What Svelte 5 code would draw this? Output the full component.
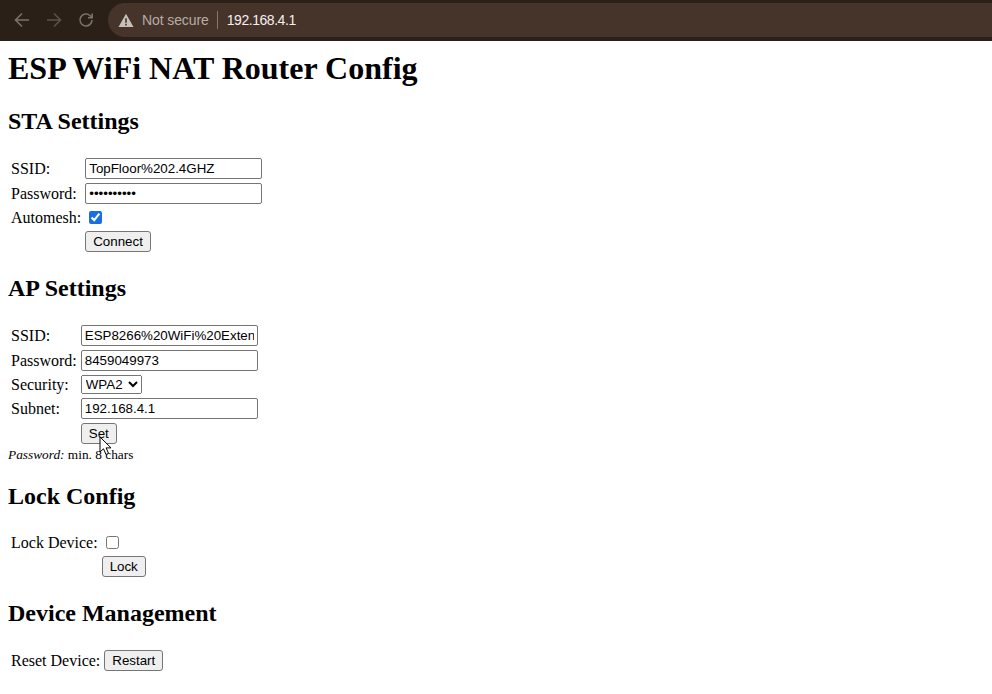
<script>
  let ssid = "TopFloor%202.4GHZ"
  let password = "0123456789"
  let automesh = true
  let locked = false
</script>

<style>
  :global(body) {
    margin: 0;
    background: #fff;
    color: #000;
    font-family: "Liberation Serif", serif;
    font-size: 16px;
  }
  .toolbar {
    display: flex;
    align-items: flex-start;
    height: 41px;
    padding-top: 3px;
    box-sizing: border-box;
    background: #2b2018;
  }
  .nav {
    display: flex;
    align-items: center;
    gap: 14px;
    height: 34px;
    width: 108px;
    padding-left: 13px;
    box-sizing: border-box;
  }
  .nav svg {
    display: block;
  }
  .omnibox {
    flex: 1;
    display: flex;
    align-items: center;
    height: 34px;
    padding-left: 10px;
    border-radius: 17px 0 0 17px;
    background: #46342b;
    font-family: "Liberation Sans", sans-serif;
    font-size: 14px;
  }
  .insecure {
    margin-left: 8px;
    padding-right: 8px;
    color: #b5aca7;
    border-right: 1px solid #85786f;
    line-height: 18px;
    letter-spacing: -0.1px;
  }
  .host {
    margin-left: 9px;
    color: #f4f0ee;
    letter-spacing: -0.45px;
  }
  main {
    padding: 9px 8px 8px;
  }
  h1 {
    margin: 0 0 21px;
    font-size: 32px;
  }
  h2 {
    margin: 20px 0;
    font-size: 24px;
  }
  table {
    border-spacing: 2px;
  }
  td {
    padding: 1px;
  }
  input,
  select,
  button {
    font-family: "Liberation Sans", sans-serif;
    font-size: 13.333px;
  }
  .text {
    width: 177px;
    height: 21px;
    box-sizing: border-box;
    padding: 1px 3px;
    margin: 0;
    border: 1px solid #767676;
    border-radius: 2px;
  }
  input[type="checkbox"] {
    display: block;
    margin: 3px 3px 3px 4px;
    accent-color: #1a6fe0;
  }
  select {
    width: 61px;
  }
  button {
    height: 21px;
    padding: 0 7px;
    border: 1px solid #767676;
    border-radius: 3px;
    background: #efefef;
  }
  .set-cell {
    position: relative;
  }
  .cursor {
    position: absolute;
    left: 19px;
    top: 14px;
  }
  .note {
    margin: 0;
    font-size: 13.333px;
  }
</style>

<header class="toolbar">
  <div class="nav">
    <svg width="18" height="18" viewBox="0 0 18 18" fill="none" stroke="#7b716a" stroke-width="1.6"><path d="M16 9H2.5M9 2.5 2.5 9 9 15.5" /></svg>
    <svg width="18" height="18" viewBox="0 0 18 18" fill="none" stroke="#5d524b" stroke-width="1.6"><path d="M2 9h13.5M9 2.5 15.5 9 9 15.5" /></svg>
    <svg width="18" height="18" viewBox="0 0 18 18" fill="none" stroke="#7b716a" stroke-width="1.6"><path d="M15 9a6 6 0 1 1-1.8-4.3L15 6.5M15.2 2.5v4.2H11" /></svg>
  </div>
  <div class="omnibox">
    <svg width="16" height="15" viewBox="0 0 16 15"><path d="M8 .8 15.5 14H.5Z" fill="#c7bfba" /><path d="M7.2 5.2h1.6v4.6H7.2zM7.2 10.8h1.6v1.6H7.2z" fill="#46342b" /></svg>
    <span class="insecure">Not secure</span>
    <span class="host">192.168.4.1</span>
  </div>
</header>

<main>
  <h1>ESP WiFi NAT Router Config</h1>

  <h2>STA Settings</h2>
  <table>
    <tbody>
      <tr><td>SSID:</td><td><input class="text" type="text" value={ssid} /></td></tr>
      <tr><td>Password:</td><td><input class="text" type="password" value={password} /></td></tr>
      <tr><td>Automesh:</td><td><input type="checkbox" checked={automesh} /></td></tr>
      <tr><td></td><td><button>Connect</button></td></tr>
    </tbody>
  </table>

  <h2>AP Settings</h2>
  <table>
    <tbody>
      <tr><td>SSID:</td><td><input class="text" type="text" value="ESP8266%20WiFi%20Extender" /></td></tr>
      <tr><td>Password:</td><td><input class="text" type="text" value="8459049973" /></td></tr>
      <tr><td>Security:</td><td><select><option>WPA2</option><option>Open</option></select></td></tr>
      <tr><td>Subnet:</td><td><input class="text" type="text" value="192.168.4.1" /></td></tr>
      <tr>
        <td></td>
        <td class="set-cell">
          <button>Set</button>
          <svg class="cursor" width="14" height="20" viewBox="0 0 14 20"><path d="M1 1v15l3.5-3.2L7 18.5l2.6-1.1-2.5-5.5H12Z" fill="#fff" stroke="#000" stroke-width="1" /></svg>
        </td>
      </tr>
    </tbody>
  </table>
  <p class="note"><i>Password:</i> min. 8 chars</p>

  <h2>Lock Config</h2>
  <table>
    <tbody>
      <tr><td>Lock Device:</td><td><input type="checkbox" checked={locked} /></td></tr>
      <tr><td></td><td><button>Lock</button></td></tr>
    </tbody>
  </table>

  <h2>Device Management</h2>
  <table>
    <tbody>
      <tr><td>Reset Device:</td><td><button>Restart</button></td></tr>
    </tbody>
  </table>
</main>
